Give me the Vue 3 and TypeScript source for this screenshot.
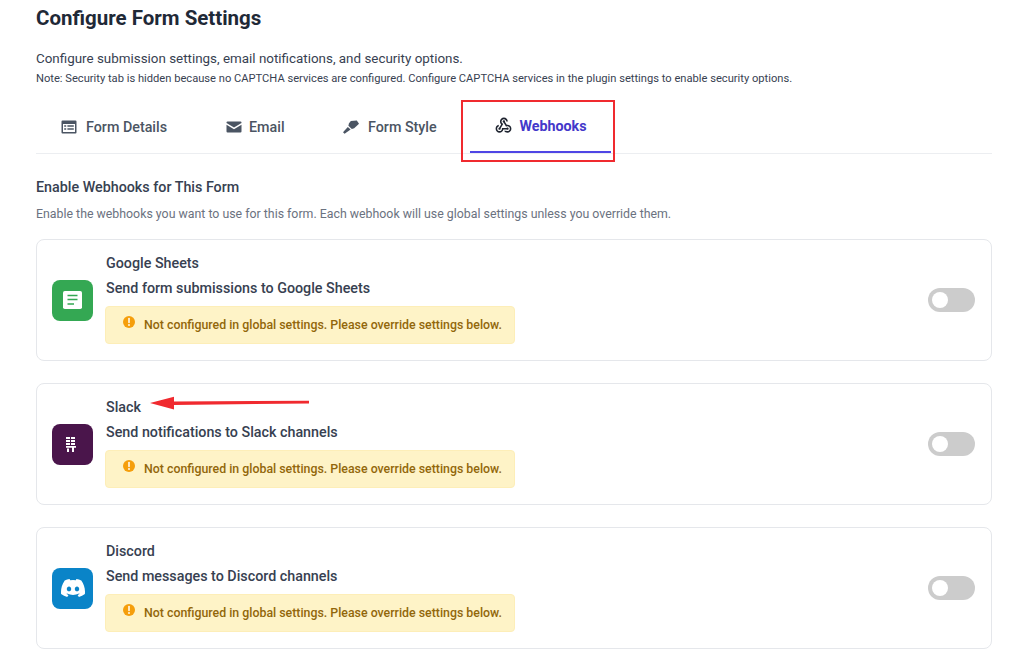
<script setup lang="ts">
interface Webhook {
  name: string;
  description: string;
  kind: 'sheets' | 'slack' | 'discord';
}

const tabs = [
  { label: 'Form Details', icon: 'details' },
  { label: 'Email', icon: 'email' },
  { label: 'Form Style', icon: 'style' },
  { label: 'Webhooks', icon: 'webhooks' },
];

const webhooks: Webhook[] = [
  { name: 'Google Sheets', description: 'Send form submissions to Google Sheets', kind: 'sheets' },
  { name: 'Slack', description: 'Send notifications to Slack channels', kind: 'slack' },
  { name: 'Discord', description: 'Send messages to Discord channels', kind: 'discord' },
];
</script>

<template>
  <div class="page">
    <h1 class="title">Configure Form Settings</h1>
    <p class="intro">Configure submission settings, email notifications, and security options.</p>
    <p class="note">Note: Security tab is hidden because no CAPTCHA services are configured. Configure CAPTCHA services in the plugin settings to enable security options.</p>

    <nav class="tabs">
      <div
        v-for="tab in tabs"
        :key="tab.label"
        :class="['tab', `tab-${tab.icon}`, { active: tab.icon === 'webhooks' }]">
        <svg v-if="tab.icon === 'details'" class="tab-icon" viewBox="0 0 16 16">
          <path fill="#4b5563" fill-rule="evenodd" d="M1.500 1.500h13a1 1 0 0 1 1 1v11a1 1 0 0 1-1 1h-13a1 1 0 0 1-1-1v-11a1 1 0 0 1 1-1ZM2 5v8h12V5ZM3.200 6.300h2v1.400h-2Zm3.200 0h6.400v1.400H6.400Zm-3.200 3h2v1.400h-2Zm3.200 0h6.400v1.400H6.400Z" />
        </svg>
        <svg v-else-if="tab.icon === 'email'" class="tab-icon" viewBox="0 0 16 16">
          <path fill="#4b5563" d="M1.600 2.500h12.800a1.100 1.100 0 0 1 1.100 1.100v.5L8 8.600.5 4.100v-.5a1.100 1.100 0 0 1 1.100-1.100Z" />
          <path fill="#4b5563" d="M.5 5.800 8 10.300l7.500-4.500v6.600a1.100 1.100 0 0 1-1.100 1.100H1.600a1.100 1.100 0 0 1-1.100-1.100Z" />
        </svg>
        <svg v-else-if="tab.icon === 'style'" class="tab-icon" viewBox="0 0 16 14">
          <path fill="#4b5563" d="M7.800 1 13.800.4 16 3.800 11.200 8.200 8.800 8.900 5.400 5.800 5.900 3.400Z" />
          <path fill="#4b5563" d="M4.800 6.900 7.600 9.500 1.600 13.800 0 12.200Z" />
        </svg>
        <svg v-else class="tab-icon hook-icon" viewBox="0 0 24 24">
          <path fill="#1f2430" d="M10 15h5.880c.27-.31.67-.5 1.120-.5.830 0 1.500.67 1.500 1.500s-.67 1.500-1.500 1.500c-.44 0-.84-.19-1.120-.5H11.900c-.46 2.280-2.480 4-4.900 4-2.760 0-5-2.240-5-5 0-2.420 1.720-4.440 4-4.900v2.070c-1.160.41-2 1.530-2 2.830 0 1.650 1.350 3 3 3s3-1.350 3-3v-1zm2.500-11c1.650 0 3 1.350 3 3h2c0-2.760-2.240-5-5-5s-5 2.240-5 5c0 1.430.6 2.710 1.550 3.620l-2.350 3.900c-.68.140-1.200.75-1.200 1.480 0 .830.670 1.500 1.500 1.500s1.500-.67 1.500-1.500c0-.16-.02-.31-.07-.45l3.380-5.630C10.490 9.610 9.500 8.420 9.500 7c0-1.650 1.350-3 3-3zm4.500 9c-.64 0-1.230.2-1.720.54l-3.050-5.060C11.550 8.350 11 7.740 11 7c0-.83.670-1.500 1.500-1.500S14 6.170 14 7c0 .15-.02.29-.06.43l2.190 3.640c.28-.05.57-.07.870-.07 2.760 0 5 2.240 5 5s-2.240 5-5 5c-1.850 0-3.470-1.010-4.330-2.500h2.670c.48.320 1.050.5 1.660.5 1.650 0 3-1.350 3-3s-1.350-3-3-3z" />
        </svg>
        <span>{{ tab.label }}</span>
      </div>
      <div class="highlight-box"></div>
    </nav>

    <h2 class="section-title">Enable Webhooks for This Form</h2>
    <p class="section-help">Enable the webhooks you want to use for this form. Each webhook will use global settings unless you override them.</p>

    <div class="cards">
      <section v-for="hook in webhooks" :key="hook.kind" class="card">
        <div :class="['logo', `logo-${hook.kind}`]">
          <svg v-if="hook.kind === 'sheets'" viewBox="0 0 19 18" class="logo-svg">
            <rect width="19" height="18" rx="1.800" fill="#fff" />
            <path d="M4.500 4.500h10M4.500 8.600h10M4.500 13h6.500" stroke="#34a853" stroke-width="1.500" />
          </svg>
          <svg v-else-if="hook.kind === 'slack'" viewBox="0 0 10 15" class="logo-svg slack-svg">
            <path fill="#fff" d="M0 0h4v2H0ZM5 0h4v2H5ZM0 3h4v2H0ZM5 3h4v2H5ZM0 6h4v2H0ZM5 6h4v2H5ZM0 9h10v1.800H0ZM1 11.500h2V15H1ZM6 10.800h2V15H6Z" />
          </svg>
          <svg v-else viewBox="0 0 24 18" class="logo-svg discord-svg">
            <path fill="#fff" d="M20.300 1.500A19.800 19.800 0 0 0 15.400 0c-.2.400-.5.900-.6 1.300a18.400 18.400 0 0 0-5.500 0C9 .9 8.800.4 8.600 0a19.700 19.700 0 0 0-4.900 1.500C.6 6.100-.3 10.600.1 15a20 20 0 0 0 6.100 3c.5-.7.900-1.400 1.300-2.100-.7-.3-1.400-.6-2-1 .2-.1.300-.2.500-.4a14.200 14.200 0 0 0 12.100 0l.5.400c-.6.400-1.300.7-2 1 .4.700.8 1.500 1.300 2.100a19.900 19.900 0 0 0 6-3c.5-5.100-.8-9.500-3.600-13.500ZM8 12.300c-1.200 0-2.200-1.100-2.200-2.400S6.800 7.400 8 7.400s2.200 1.100 2.200 2.500-1 2.400-2.200 2.400Zm8 0c-1.200 0-2.200-1.100-2.200-2.400s1-2.500 2.200-2.500 2.200 1.100 2.200 2.500-1 2.400-2.200 2.400Z" />
          </svg>
        </div>
        <div class="card-body">
          <div class="name">{{ hook.name }}</div>
          <div class="description">{{ hook.description }}</div>
          <div class="alert">
            <svg class="alert-icon" viewBox="0 0 12 12">
              <circle cx="6" cy="6" r="6" fill="#f59e0b" />
              <path d="M6 2.600v4" stroke="#fff" stroke-width="1.500" stroke-linecap="round" />
              <circle cx="6" cy="9" r=".9" fill="#fff" />
            </svg>
            <span>Not configured in global settings. Please override settings below.</span>
          </div>
        </div>
        <div class="toggle"><span class="knob"></span></div>
        <svg v-if="hook.kind === 'slack'" class="arrow" viewBox="0 0 159 14">
          <path fill="#f02a2f" d="M0 7 24 .8v4.700L159 4.800v2.600L24 9v4.600Z" />
        </svg>
      </section>
    </div>
  </div>
</template>

<style scoped>
.page {
  height: 670px;
  box-sizing: border-box;
  padding: 7px 32px 0 36px;
  overflow: hidden;
  background: #fff;
  font-family: Roboto, "Liberation Sans", sans-serif;
  color: #374151;
}

.title {
  margin: 0;
  font-size: 20.5px;
  line-height: 23px;
  font-weight: 700;
  color: #1f2937;
}

.intro {
  margin: 20px 0 0;
  font-size: 13.4px;
  line-height: 17px;
  color: #374151;
}

.note {
  margin: 5px 0 0;
  font-size: 11.15px;
  line-height: 14px;
  color: #374151;
}

.tabs {
  position: relative;
  display: flex;
  height: 53px;
  margin-top: 14px;
  padding-left: 9px;
  border-bottom: 1px solid #eceef1;
}

.tab {
  display: flex;
  align-items: center;
  gap: 9px;
  height: 53px;
  box-sizing: border-box;
  font-size: 14.3px;
  font-weight: 500;
  color: #4b5563;
}

.tab-details {
  width: 181px;
  padding-left: 16px;
}

.tab-email {
  gap: 7px;
  width: 117px;
}

.tab-style {
  width: 127px;
}

.tab-icon {
  width: 16px;
  height: 16px;
  flex: none;
}

.tab.active {
  justify-content: center;
  gap: 6px;
  width: 141px;
  border-bottom: 2px solid #4f46e5;
  color: #4338ca;
  font-weight: 700;
}

.tab.active .hook-icon {
  width: 19px;
  height: 19px;
}

.highlight-box {
  position: absolute;
  left: 425px;
  top: 0;
  width: 150px;
  height: 58px;
  border: 2px solid #f02a2f;
}

.section-title {
  margin: 25px 0 0;
  font-size: 14.3px;
  line-height: 17px;
  font-weight: 500;
  color: #374151;
}

.section-help {
  margin: 11px 0 0;
  font-size: 12.35px;
  line-height: 14px;
  color: #6b7280;
}

.cards {
  display: flex;
  flex-direction: column;
  gap: 22px;
  margin-top: 18px;
}

.card {
  position: relative;
  display: flex;
  align-items: center;
  height: 122px;
  box-sizing: border-box;
  padding: 0 16px 0 15px;
  border: 1px solid #e5e7eb;
  border-radius: 8px;
}

.logo {
  display: flex;
  align-items: center;
  justify-content: center;
  flex: none;
  width: 41px;
  height: 41px;
  border-radius: 8px;
}

.logo-sheets {
  background: #34a853;
}

.logo-slack {
  background: #4a154b;
}

.logo-discord {
  background: #0a84c8;
}

.logo-svg {
  width: 19px;
  height: 18px;
}

.slack-svg {
  width: 10px;
  height: 15px;
  margin-right: 3px;
}

.discord-svg {
  width: 24px;
  height: 18px;
}

.card-body {
  flex: 1;
  margin-bottom: 2px;
  margin-left: 12px;
}

.name {
  padding-left: 1px;
  font-size: 14.3px;
  line-height: 17px;
  font-weight: 500;
  color: #374151;
}

.description {
  margin-top: 8px;
  padding-left: 1px;
  font-size: 14.3px;
  line-height: 17px;
  font-weight: 500;
  color: #374151;
}

.alert {
  display: inline-flex;
  align-items: center;
  gap: 9px;
  width: 410px;
  height: 38px;
  margin-top: 9px;
  padding: 0 0 0 17px;
  box-sizing: border-box;
  border: 1px solid #fdeeb8;
  border-radius: 4px;
  background: #fef3c7;
  font-size: 12.35px;
  font-weight: 500;
  color: #92670b;
}

.alert-icon {
  width: 12px;
  height: 12px;
  flex: none;
  margin-top: -5px;
}

.toggle {
  position: relative;
  flex: none;
  width: 47px;
  height: 24px;
  border-radius: 12px;
  background: #ccc;
}

.knob {
  position: absolute;
  left: 4px;
  top: 4px;
  width: 16px;
  height: 16px;
  border-radius: 50%;
  background: #fff;
}

.arrow {
  position: absolute;
  left: 113px;
  top: 12px;
  width: 159px;
  height: 14px;
}
</style>
